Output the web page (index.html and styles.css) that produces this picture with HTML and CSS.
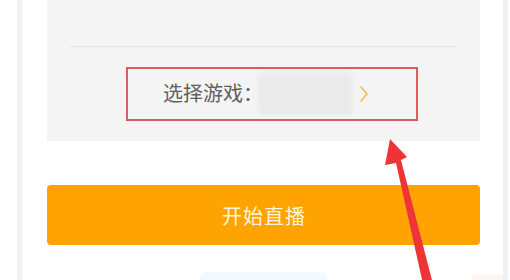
FILE: index.html
```html
<!DOCTYPE html>
<html lang="zh-CN">
<head>
<meta charset="utf-8">
<title>开始直播</title>
<link rel="stylesheet" href="styles.css">
</head>
<body>
<div class="frame">
  <div class="gutter-left"></div>
  <div class="strip"></div>
  <main class="content">
    <section class="panel">
      <div class="panel-top"></div>
      <div class="divider"></div>
      <div class="select-box">
        <span class="select-label">选择游戏：</span>
        <span class="select-value"></span>
        <svg class="chevron" width="10" height="18" viewBox="0 0 10 18">
          <polyline points="2,2 8,9 2,16" fill="none" stroke="#f2b84e" stroke-width="1.6" stroke-linecap="round" stroke-linejoin="round"/>
        </svg>
      </div>
    </section>
    <button class="start-btn">开始直播</button>
    <div class="below">
      <div class="blob-blue"></div>
      <div class="blob-pink"></div>
    </div>
  </main>
  <div class="strip"></div>
  <div class="gutter-right"></div>
</div>
<svg class="arrow" width="510" height="280" viewBox="0 0 510 280">
  <polygon points="390,139 407,157 401,160 433,284 423,284 396,163 385,165" fill="#ef3438"/>
</svg>
</body>
</html>
```

FILE: styles.css
```css
html, body {
  margin: 0;
  padding: 0;
}
body {
  width: 510px;
  height: 280px;
  overflow: hidden;
  background: #ffffff;
  position: relative;
  font-family: "Noto Sans CJK SC", "Noto Sans", sans-serif;
}
.frame {
  display: flex;
  height: 280px;
}
.gutter-left {
  width: 17px;
  flex: none;
}
.gutter-right {
  width: 3px;
  flex: none;
}
.strip {
  width: 5px;
  flex: none;
  background: #eef2f5;
}
.content {
  width: 481px;
  flex: none;
  padding: 0 23px 0 25px;
  box-sizing: border-box;
  display: flex;
  flex-direction: column;
}
.panel {
  background: #f4f4f4;
  padding: 0 24px 20px 23px;
  display: flex;
  flex-direction: column;
}
.panel-top {
  height: 46px;
}
.divider {
  height: 1px;
  background: #e2e2e2;
}
.select-box {
  margin-top: 20px;
  margin-left: 56px;
  width: 292px;
  height: 54px;
  box-sizing: border-box;
  border: 2px solid #dd5b5e;
  display: flex;
  align-items: center;
  padding-left: 35px;
}
.select-label {
  font-size: 20px;
  color: #606060;
  line-height: 1;
  margin-top: -3px;
}
.select-value {
  width: 94px;
  height: 42px;
  margin-left: -5px;
  background: #eaeaea;
  filter: blur(2px);
}
.chevron {
  margin-left: 7px;
  margin-top: 0;
}
.start-btn {
  margin-top: 44px;
  height: 60px;
  flex: none;
  box-sizing: border-box;
  border: none;
  border-radius: 4px;
  background: #ffa300;
  color: #fff4dc;
  font-family: "Noto Sans CJK SC", "Noto Sans", sans-serif;
  font-size: 20px;
  letter-spacing: 1px;
  padding: 0 0 0 1px;
}
.below {
  margin-top: 27px;
  display: flex;
  align-items: flex-start;
}
.blob-blue {
  flex: none;
  margin-left: 153px;
  width: 127px;
  height: 12px;
  background: #f3f9fc;
  border-radius: 6px 6px 0 0;
}
.blob-pink {
  flex: none;
  margin-left: 145px;
  margin-top: 3px;
  width: 31px;
  height: 10px;
  background: #fdf4f4;
}
.arrow {
  position: absolute;
  left: 0;
  top: 0;
}
```
